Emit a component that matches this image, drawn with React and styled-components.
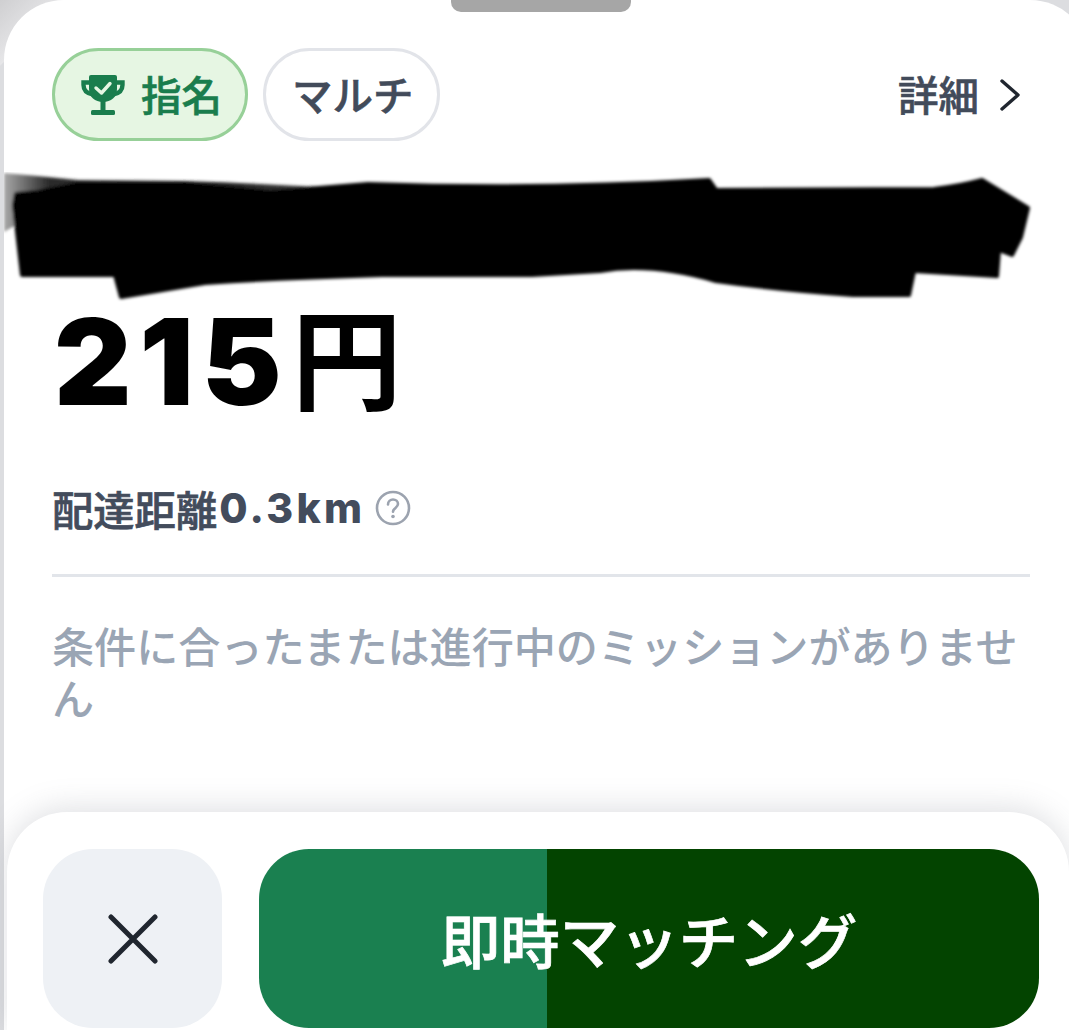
import React from "react";
import styled, { createGlobalStyle } from "styled-components";

const GlobalStyle = createGlobalStyle`
	html, body {
		margin: 0;
		padding: 0;
	}
	body {
		background: #dcdde0;
		font-family: Inter, "Noto Sans CJK JP", sans-serif;
	}
`;

const Page = styled.div`
	background: linear-gradient(135deg, #cfcfd1 0, #e6e6e8 46px, #dcdde0 47px);
	height: 1030px;
	overflow: hidden;
	padding-left: 4px;
	width: 1069px;
	box-sizing: border-box;
`;

const Sheet = styled.section`
	background: #fff;
	border-radius: 60px 60px 0 0;
	display: flex;
	flex-direction: column;
	height: 100%;
	width: 1086px;
`;

const Handle = styled.div`
	background: #a6a6a6;
	border-radius: 0 0 10px 10px;
	flex: none;
	height: 12px;
	margin: 0 0 36px 447px;
	width: 180px;
`;

const TopRow = styled.div`
	align-items: center;
	display: flex;
	justify-content: space-between;
	padding: 0 70px 0 48px;
`;

const Tags = styled.div`
	display: flex;
	gap: 15px;
`;

const Tag = styled.div`
	align-items: center;
	background: ${(p) => (p.$active ? "#e6f6e3" : "#fff")};
	border: 3px solid ${(p) => (p.$active ? "#97d098" : "#e2e4e9")};
	border-radius: 47px;
	box-sizing: border-box;
	color: ${(p) => (p.$active ? "#1a7d4d" : "#424b5a")};
	display: flex;
	font: 500 40.5px/1 "Noto Sans CJK JP", sans-serif;
	-webkit-text-stroke: 0.6px currentColor;
	gap: 16px;
	height: 93px;
	padding: 0 23px 0 26px;
`;

const DetailLink = styled.div`
	align-items: center;
	color: #424b5a;
	display: flex;
	font: 500 40.5px/1 "Noto Sans CJK JP", sans-serif;
	-webkit-text-stroke: 0.6px currentColor;
	gap: 21px;
`;

const Redaction = styled.svg`
	display: block;
	flex: none;
	margin-top: 31px;
`;

const Price = styled.div`
	color: #000;
	font: 900 120px/104px Inter, sans-serif;
	letter-spacing: 8px;
	padding-left: 50px;
	white-space: nowrap;
`;

const Yen = styled.span`
	font: 700 110px/104px "Noto Sans CJK JP", sans-serif;
	letter-spacing: 0;
	margin-left: 2px;
	vertical-align: 3px;
`;

const DistanceRow = styled.div`
	align-items: center;
	color: #434c5c;
	display: flex;
	font: 500 41.3px/56px "Noto Sans CJK JP", sans-serif;
	-webkit-text-stroke: 0.7px currentColor;
	height: 56px;
	margin-top: 66px;
	padding-left: 48px;
`;

const Distance = styled.span`
	font: 800 41px/56px Inter, sans-serif;
	-webkit-text-stroke: 0;
	letter-spacing: 3.2px;
	margin-left: 2px;
`;

const HelpIcon = styled.svg`
	margin-left: 10px;
`;

const Divider = styled.hr`
	background: #e2e5ea;
	border: 0;
	height: 3px;
	margin: 38px 60px 0 48px;
`;

const MissionNote = styled.p`
	color: #9aa5b4;
	font: 500 42.1px/52px "Noto Sans CJK JP", sans-serif;
	margin: 42px 60px 0 48px;
`;

const Footer = styled.footer`
	background: #fff;
	border-radius: 60px 60px 0 0;
	box-shadow: 0 -4px 30px rgba(120, 125, 140, 0.24);
	display: flex;
	gap: 37px;
	height: 218px;
	box-sizing: border-box;
	margin: auto 21px 0 3px;
	padding: 37px 30px 2px 36px;
`;

const CloseButton = styled.button`
	align-items: center;
	background: #eef1f5;
	border: 0;
	border-radius: 50px;
	display: flex;
	flex: none;
	height: 179px;
	justify-content: center;
	padding: 0;
	width: 179px;
`;

const MatchButton = styled.button`
	background: linear-gradient(
		90deg,
		#1a8050 ${(p) => p.$progress}%,
		#034400 ${(p) => p.$progress}%
	);
	border: 0;
	border-radius: 50px;
	color: #fff;
	flex: 1;
	font: 500 59.5px/1 "Noto Sans CJK JP", sans-serif;
	-webkit-text-stroke: 0.7px currentColor;
	height: 179px;
	padding: 0;
`;

const TrophyIcon = () => (
	<svg width="44" height="40" viewBox="0 0 44 40">
		<path fill="#1a7d4d" d="M10 0H34a2 2 0 0 1 2 2V14C36 22 30 27 22 27S8 22 8 14V2A2 2 0 0 1 10 0Z" />
		<path d="M9 7.500H2.500V10C2.500 15 6 18.500 12 19.500M35 7.500H41.500V10C41.500 15 38 18.500 32 19.500" fill="none" stroke="#1a7d4d" strokeWidth="4.4" />
		<rect x="19.500" y="24" width="5" height="12" fill="#1a7d4d" />
		<rect x="10" y="35" width="24" height="5" rx="1.500" fill="#1a7d4d" />
		<path d="M15 13l5.500 5 8.500-9.500" fill="none" stroke="#e6f6e3" strokeWidth="3.4" strokeLinecap="round" strokeLinejoin="round" />
	</svg>
);

const Chevron = () => (
	<svg width="20" height="32" viewBox="0 0 20 32">
		<path d="M2 2l16 14L2 30" fill="none" stroke="#20262f" strokeWidth="3.4" strokeLinecap="round" strokeLinejoin="round" />
	</svg>
);

const RedactionMark = () => (
	<Redaction width="1086" height="130" viewBox="4 172 1086 130">
		<defs>
			<linearGradient id="smear" x1="0" x2="1" y1="0" y2="0">
				<stop offset="0" stopColor="#a8a8a8" />
				<stop offset="0.12" stopColor="#2c2c2c" />
				<stop offset="0.6" stopColor="#222" />
				<stop offset="1" stopColor="#555" />
			</linearGradient>
			<filter id="soft">
				<feGaussianBlur stdDeviation="1.5" />
			</filter>
		</defs>
		<g filter="url(#soft)">
			<path fill="url(#smear)" d="M4 173Q40 176 78 180L184 181Q280 184 372 190V225H16L4 232Z" />
			<path
				fill="#000"
				strokeLinejoin="round"
				stroke="#000"
				strokeWidth="4"
				d="M14 205L16 194L38 192L78 184L184 184L270 192L368 184Q540 190 709 180L716 190L934 189Q960 186 982 180L1028 208L1021 237L1012 255L999 250L997 276L914 271L909 295L853 295Q780 290 716 281Q650 262 600 271L532 275L382 275Q280 278 205 283L121 297L115 275L22 275L18 240Z"
			/>
		</g>
	</Redaction>
);

const App = () => {
	return (
		<Page>
			<GlobalStyle />
			<Sheet>
				<Handle />
				<TopRow>
					<Tags>
						<Tag $active>
							<TrophyIcon />
							指名
						</Tag>
						<Tag>マルチ</Tag>
					</Tags>
					<DetailLink>
						詳細
						<Chevron />
					</DetailLink>
				</TopRow>
				<RedactionMark />
				<Price>
					215<Yen>円</Yen>
				</Price>
				<DistanceRow>
					配達距離<Distance>0.3km</Distance>
					<HelpIcon width="36" height="36" viewBox="0 0 36 36">
						<circle cx="18" cy="18" r="16" fill="none" stroke="#9ca3af" strokeWidth="2.6" />
						<path d="M13 14.500c0-3 2.300-5 5-5s5 2 5 4.600c0 3.600-5 4-5 7.600" fill="none" stroke="#9ca3af" strokeWidth="2.6" strokeLinecap="round" />
						<circle cx="18" cy="26.500" r="1.800" fill="#9ca3af" />
					</HelpIcon>
				</DistanceRow>
				<Divider />
				<MissionNote>条件に合ったまたは進行中のミッションがありません</MissionNote>
				<Footer>
					<CloseButton aria-label="閉じる">
						<svg width="50" height="50" viewBox="0 0 50 50">
							<path d="M3 3l44 44M47 3L3 47" fill="none" stroke="#20262f" strokeWidth="5" strokeLinecap="round" />
						</svg>
					</CloseButton>
					<MatchButton $progress={36.9}>即時マッチング</MatchButton>
				</Footer>
			</Sheet>
		</Page>
	);
};

export default App;
